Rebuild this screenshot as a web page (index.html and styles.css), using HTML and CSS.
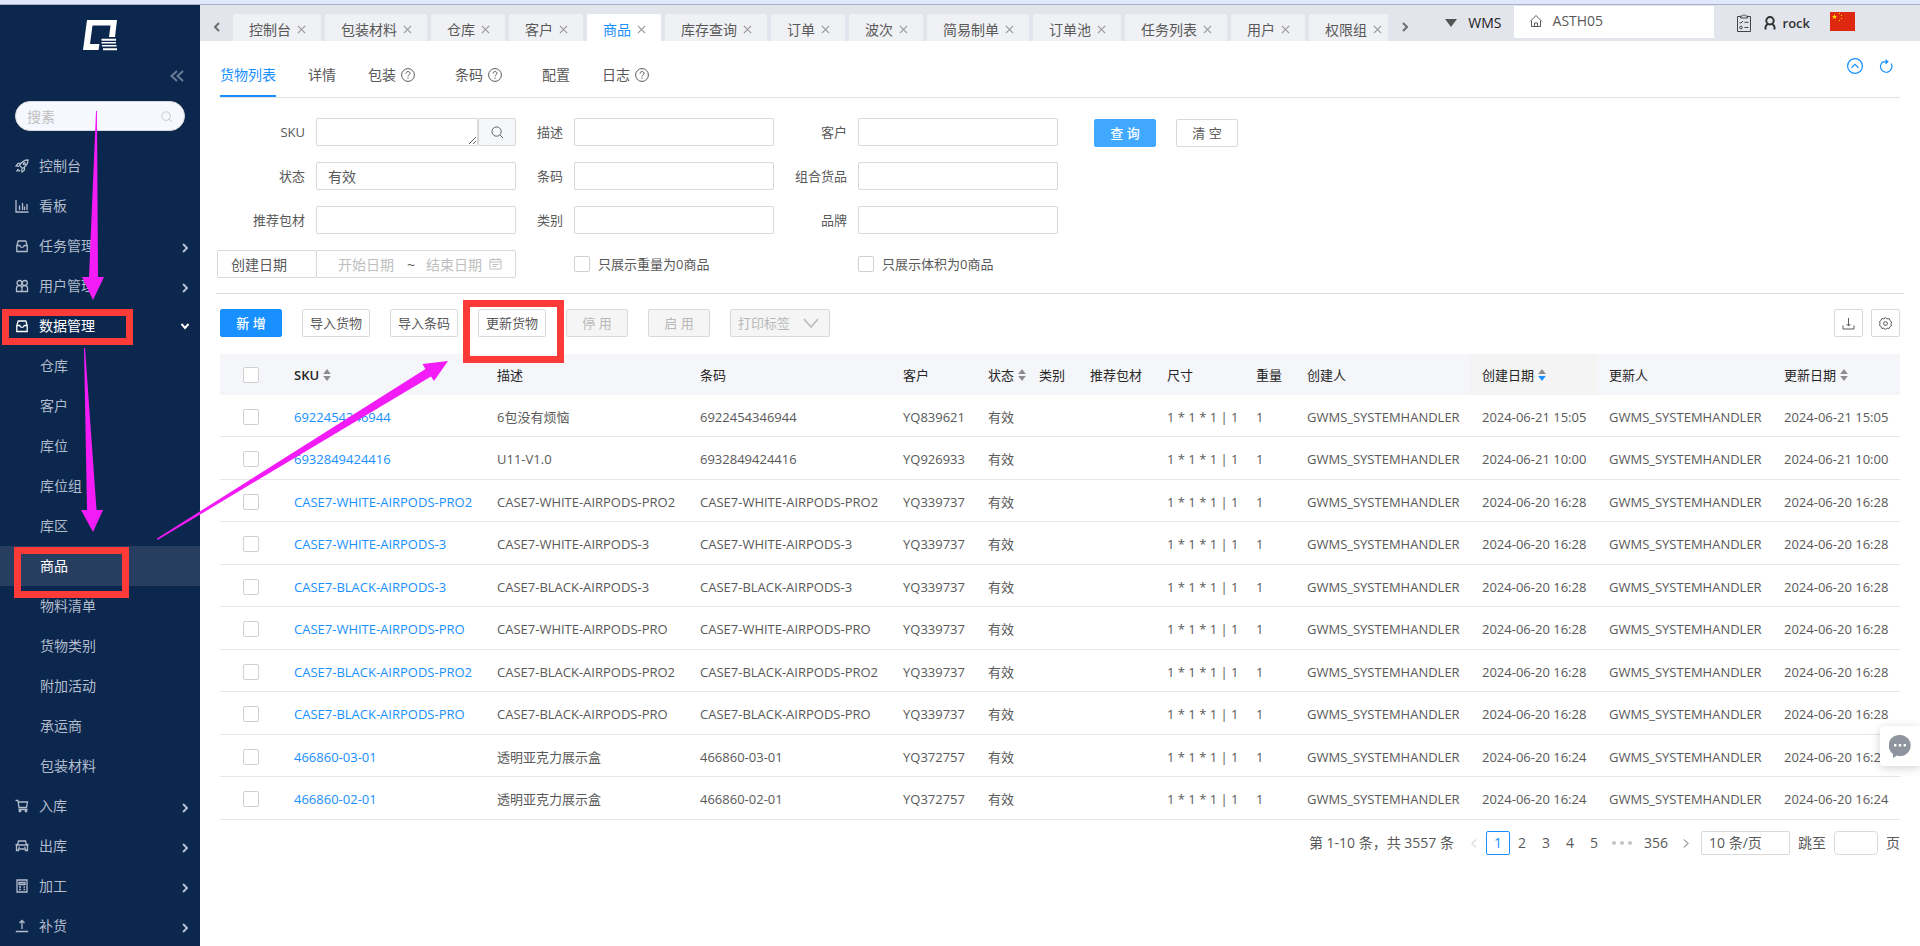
FILE: index.html
```html
<!DOCTYPE html>
<html lang="zh-CN">
<head>
<meta charset="utf-8">
<title>WMS - 商品</title>
<link rel="stylesheet" href="styles.css">
</head>
<body>
<svg class="defs" aria-hidden="true">
  <symbol id="close" viewBox="0 0 10 10"><path d="M1 1l8 8M9 1L1 9"/></symbol>
  <symbol id="right" viewBox="0 0 6 10"><path d="M1 1l4 4-4 4"/></symbol>
  <symbol id="left" viewBox="0 0 6 10"><path d="M5 1L1 5l4 4"/></symbol>
  <symbol id="search" viewBox="0 0 14 14"><circle cx="6" cy="6" r="5"/><path d="M9.7 9.7L13 13"/></symbol>
  <symbol id="help" viewBox="0 0 14 14"><circle cx="7" cy="7" r="6.4"/><path d="M5 5.6c0-2.8 4-2.6 4-.2 0 1.4-2 1.5-2 3M7 9.6v1.2"/></symbol>
  <symbol id="sort" viewBox="0 0 8 14"><path d="M4 1l3.800 5H.2z"/><path class="desc" d="M4 13L.2 8h7.600z"/></symbol>
  <symbol id="box" viewBox="0 0 14 14"><path d="M3.2 2h7.6l1.4 4.500v6H1.8v-6zM1.8 6.500h3c.3 2.400 4.100 2.400 4.400 0h3"/></symbol>
</svg>
<div class="strip"></div>
<div class="app">
  <aside class="side">
    <div class="brand">
      <svg class="logo" viewBox="0 0 34 31" aria-label="Logo"><path d="M4 0h30l-2 17h-6l1.500-11.500H9.500L7 24h9.500l-1 6H0zM18.500 18.800H33v2H18.500zM18.500 22H33v1.600H18.500zM19 25h14.500v1.600H19zM20 28.200h14v2H20z"/></svg>
    </div>
    <div class="collapse"><button class="plain" aria-label="收起"><svg width="14" height="12" viewBox="0 0 14 12"><path d="M7 1L1.500 6 7 11M13 1L7.500 6l5.500 5"/></svg></button></div>
    <label class="find"><input type="text" placeholder="搜素" aria-label="搜素"><svg width="12" height="12"><use href="#search"/></svg></label>
    <nav class="menu">
      <a href="#"><svg viewBox="0 0 14 14"><path d="M13 1C9 1 6.500 3 4.500 6.500L7.500 9.500C11 7.500 13 5 13 1zM5.500 4.500H3L1 7l3 .3M9.500 8.500V11L7 13l-.3-3M3.500 10l-2 2.500M5 11l-1.500 1.500"/><circle cx="9.300" cy="4.700" r="1"/></svg><span>控制台</span></a>
      <a href="#"><svg viewBox="0 0 14 14"><path d="M1 1v12h12.500M4.500 11V6.500M7.500 11V4M9.500 11V7.500M12 11V5"/></svg><span>看板</span></a>
      <a href="#"><svg><use href="#box"/></svg><span>任务管理</span><svg class="arr"><use href="#right"/></svg></a>
      <a href="#"><svg viewBox="0 0 14 14"><circle cx="4.500" cy="4" r="2.500"/><circle cx="9.800" cy="4" r="2.500"/><path d="M1.500 12.500V9.500q0-3 2.700-3t2.800 3v3zM7 12.500V9.500q0-3 2.800-3t2.700 3v3z"/></svg><span>用户管理</span><svg class="arr"><use href="#right"/></svg></a>
      <a href="#" class="open"><svg><use href="#box"/></svg><span>数据管理</span><svg class="arr down" viewBox="0 0 10 8"><path d="M1.500 2L5 6l3.500-4"/></svg></a>
      <a href="#" class="sub">仓库</a>
      <a href="#" class="sub">客户</a>
      <a href="#" class="sub">库位</a>
      <a href="#" class="sub">库位组</a>
      <a href="#" class="sub">库区</a>
      <a href="#" class="sub on">商品</a>
      <a href="#" class="sub">物料清单</a>
      <a href="#" class="sub">货物类别</a>
      <a href="#" class="sub">附加活动</a>
      <a href="#" class="sub">承运商</a>
      <a href="#" class="sub">包装材料</a>
      <a href="#"><svg viewBox="0 0 14 14"><path d="M.5 1.500H3L4 8.500h7.500L12.500 3H3.500M3.500 10.500h9"/><circle cx="5" cy="12" r=".8"/><circle cx="11" cy="12" r=".8"/></svg><span>入库</span><svg class="arr"><use href="#right"/></svg></a>
      <a href="#"><svg viewBox="0 0 14 14"><path d="M2.500 6L3.500 2h7l1 4M.5 5.500l2 .5h9l2-.5M1.500 6.500v5h2v-1.500h7v1.500h2v-5M3.500 8.300h1.300M9.200 8.300h1.300"/></svg><span>出库</span><svg class="arr"><use href="#right"/></svg></a>
      <a href="#"><svg viewBox="0 0 14 14"><path d="M2 1h10v12H2zM4 3.500h6v2H4zM4 8h2M8.500 8H10M4 10.500h2M8.500 10.500H10"/></svg><span>加工</span><svg class="arr"><use href="#right"/></svg></a>
      <a href="#"><svg viewBox="0 0 14 14"><path d="M7 10V1.500M4.500 4L7 1.500 9.500 4M.8 12.500h12.400"/></svg><span>补货</span><svg class="arr"><use href="#right"/></svg></a>
    </nav>
  </aside>

  <main class="main">
    <header class="top">
      <button class="plain nudge" aria-label="向左"><svg width="6" height="10"><use href="#left"/></svg></button>
      <div class="tabs">
        <a href="#">控制台<svg><use href="#close"/></svg></a>
        <a href="#">包装材料<svg><use href="#close"/></svg></a>
        <a href="#">仓库<svg><use href="#close"/></svg></a>
        <a href="#">客户<svg><use href="#close"/></svg></a>
        <a href="#" class="on">商品<svg><use href="#close"/></svg></a>
        <a href="#">库存查询<svg><use href="#close"/></svg></a>
        <a href="#">订单<svg><use href="#close"/></svg></a>
        <a href="#">波次<svg><use href="#close"/></svg></a>
        <a href="#">简易制单<svg><use href="#close"/></svg></a>
        <a href="#">订单池<svg><use href="#close"/></svg></a>
        <a href="#">任务列表<svg><use href="#close"/></svg></a>
        <a href="#">用户<svg><use href="#close"/></svg></a>
        <a href="#">权限组<svg><use href="#close"/></svg></a>
      </div>
      <button class="plain nudge" aria-label="向右"><svg width="6" height="10"><use href="#right"/></svg></button>
      <button class="plain wms"><svg width="12" height="8" viewBox="0 0 12 8"><path d="M0 0h12L6 8z"/></svg>WMS</button>
      <button class="plain depot"><svg width="14" height="14" viewBox="0 0 14 14"><path d="M1 7.500L7 1.500l6 6M2.500 7v5.500h9V7M5.500 12.500V9h3v3.500"/></svg>ASTH05</button>
      <button class="plain tasks" aria-label="任务"><svg width="16" height="20" viewBox="0 0 16 20"><path d="M4.500 3.500h-3v15h13v-15h-3M4.500 5h7V3H9.500L8 1.500 6.500 3h-2zM3.500 9l1.200 1.300L7 8M8.500 9.300h4M8.500 14.500h4"/><circle cx="5" cy="14.500" r="1.300"/></svg></button>
      <button class="plain user"><svg width="12" height="14" viewBox="0 0 12 14"><circle cx="6" cy="4.700" r="3.700"/><path d="M1.500 13.500V11q0-1.500 2.500-3M10.500 13.500V11q0-1.500-2.500-3"/></svg>rock</button>
      <svg class="flag" width="25" height="19" viewBox="0 0 25 19" role="img" aria-label="中国"><path fill="#de2910" d="M0 0h25v19H0z"/><path fill="#ffde00" d="M4.500 2l.7 1.900h2L5.600 5.100l.6 2-1.700-1.200-1.700 1.200.6-2L1.800 3.900h2zM9 1h1v1H9zM11 3h1v1h-1zM11 6h1v1h-1zM9 8h1v1H9z"/></svg>
    </header>

    <section class="page">
      <div class="views">
        <a href="#" class="on">货物列表</a>
        <a href="#">详情</a>
        <a href="#" class="tip">包装<svg><use href="#help"/></svg></a>
        <a href="#" class="tip">条码<svg><use href="#help"/></svg></a>
        <a href="#">配置</a>
        <a href="#">日志<svg><use href="#help"/></svg></a>
        <div class="acts">
          <button class="plain" aria-label="收起"><svg width="16" height="16" viewBox="0 0 16 16"><circle cx="8" cy="8" r="7.400"/><path d="M4.500 9.700L8 6.300l3.500 3.400"/></svg></button>
          <button class="plain" aria-label="刷新"><svg width="14" height="14" viewBox="0 0 14 14"><path d="M4.500 2.500A5.700 5.700 0 1 0 12 4.500M8 2.800H4.300M6.500.8L8.800 2.800 6.500 4.800"/></svg></button>
        </div>
      </div>

      <form class="filter">
        <div class="fields">
          <label for="sku">SKU</label>
          <div class="group"><textarea id="sku" rows="1"></textarea><button type="button" aria-label="查找"><svg width="13" height="13"><use href="#search"/></svg></button></div>
          <label for="desc">描述</label><input id="desc" type="text">
          <label for="cust">客户</label><input id="cust" type="text">
          <label for="state">状态</label><select id="state"><option>有效</option></select>
          <label for="code">条码</label><input id="code" type="text">
          <label for="combo">组合货品</label><input id="combo" type="text">
          <label for="pack">推荐包材</label><input id="pack" type="text">
          <label for="kind">类别</label><input id="kind" type="text">
          <label for="mark">品牌</label><input id="mark" type="text">
          <select class="by" aria-label="日期类型"><option>创建日期</option></select>
          <div class="range"><input type="text" placeholder="开始日期" aria-label="开始日期"><span>~</span><input type="text" placeholder="结束日期" aria-label="结束日期"><svg width="13" height="13" viewBox="0 0 13 13"><path d="M1 2.500h11v9.500H1zM1 5h11M4 1v2.500M9 1v2.500M3.500 7.500h6M3.500 9.500h4"/></svg></div>
          <label class="only w"><input type="checkbox">只展示重量为0商品</label>
          <label class="only v"><input type="checkbox">只展示体积为0商品</label>
        </div>
        <div class="go"><button type="button" class="btn query">查 询</button><button type="button" class="btn">清 空</button></div>
      </form>

      <div class="tools">
        <button class="btn primary">新 增</button>
        <button class="btn">导入货物</button>
        <button class="btn">导入条码</button>
        <button class="btn">更新货物</button>
        <button class="btn" disabled>停 用</button>
        <button class="btn" disabled>启 用</button>
        <button class="btn print" disabled>打印标签<svg width="16" height="10" viewBox="0 0 16 10"><path d="M1 1l7 8 7-8"/></svg></button>
        <div class="right">
          <button class="btn ico" aria-label="下载"><svg width="13" height="13" viewBox="0 0 13 13"><path d="M1 8.500V12h11V8.500M6.500 1v8M4.500 7l2 2 2-2"/></svg></button>
          <button class="btn ico" aria-label="设置"><svg width="13" height="13" viewBox="0 0 13 13"><path d="M6.500.7l1.700 1.100 2-.1.800 1.900 1.500 1.300-.5 1.900.5 1.900L11 9.700l-.8 1.700-2-.1-1.700 1.100-1.700-1.100-2 .1L2 9.500.5 8.400 1 6.500.5 4.600 2 3.500l.8-1.800 2 .1z"/><circle cx="6.500" cy="6.500" r="1.900"/></svg></button>
        </div>
      </div>

      <table class="grid">
        <colgroup><col class="c62"><col class="c203"><col class="c203"><col class="c203"><col class="c85"><col class="c51"><col class="c51"><col class="c77"><col class="c89"><col class="c51"><col class="c175"><col class="c127"><col class="c175"><col class="c128"></colgroup>
        <thead><tr>
          <th class="ck"><input type="checkbox" aria-label="全选"></th><th class="strong">SKU<svg><use href="#sort"/></svg></th><th>描述</th><th>条码</th><th>客户</th><th>状态<svg><use href="#sort"/></svg></th><th>类别</th><th>推荐包材</th><th>尺寸</th><th>重量</th><th>创建人</th><th class="sorted">创建日期<svg><use href="#sort"/></svg></th><th>更新人</th><th>更新日期<svg><use href="#sort"/></svg></th>
        </tr></thead>
        <tbody>
          <tr><td class="ck"><input type="checkbox" aria-label="选择"></td><td><a href="#">6922454346944</a></td><td>6包没有烦恼</td><td>6922454346944</td><td>YQ839621</td><td>有效</td><td></td><td></td><td>1 * 1 * 1 | 1</td><td>1</td><td>GWMS_SYSTEMHANDLER</td><td>2024-06-21 15:05</td><td>GWMS_SYSTEMHANDLER</td><td>2024-06-21 15:05</td></tr>
          <tr><td class="ck"><input type="checkbox" aria-label="选择"></td><td><a href="#">6932849424416</a></td><td>U11-V1.0</td><td>6932849424416</td><td>YQ926933</td><td>有效</td><td></td><td></td><td>1 * 1 * 1 | 1</td><td>1</td><td>GWMS_SYSTEMHANDLER</td><td>2024-06-21 10:00</td><td>GWMS_SYSTEMHANDLER</td><td>2024-06-21 10:00</td></tr>
          <tr><td class="ck"><input type="checkbox" aria-label="选择"></td><td><a href="#">CASE7-WHITE-AIRPODS-PRO2</a></td><td>CASE7-WHITE-AIRPODS-PRO2</td><td>CASE7-WHITE-AIRPODS-PRO2</td><td>YQ339737</td><td>有效</td><td></td><td></td><td>1 * 1 * 1 | 1</td><td>1</td><td>GWMS_SYSTEMHANDLER</td><td>2024-06-20 16:28</td><td>GWMS_SYSTEMHANDLER</td><td>2024-06-20 16:28</td></tr>
          <tr><td class="ck"><input type="checkbox" aria-label="选择"></td><td><a href="#">CASE7-WHITE-AIRPODS-3</a></td><td>CASE7-WHITE-AIRPODS-3</td><td>CASE7-WHITE-AIRPODS-3</td><td>YQ339737</td><td>有效</td><td></td><td></td><td>1 * 1 * 1 | 1</td><td>1</td><td>GWMS_SYSTEMHANDLER</td><td>2024-06-20 16:28</td><td>GWMS_SYSTEMHANDLER</td><td>2024-06-20 16:28</td></tr>
          <tr><td class="ck"><input type="checkbox" aria-label="选择"></td><td><a href="#">CASE7-BLACK-AIRPODS-3</a></td><td>CASE7-BLACK-AIRPODS-3</td><td>CASE7-BLACK-AIRPODS-3</td><td>YQ339737</td><td>有效</td><td></td><td></td><td>1 * 1 * 1 | 1</td><td>1</td><td>GWMS_SYSTEMHANDLER</td><td>2024-06-20 16:28</td><td>GWMS_SYSTEMHANDLER</td><td>2024-06-20 16:28</td></tr>
          <tr><td class="ck"><input type="checkbox" aria-label="选择"></td><td><a href="#">CASE7-WHITE-AIRPODS-PRO</a></td><td>CASE7-WHITE-AIRPODS-PRO</td><td>CASE7-WHITE-AIRPODS-PRO</td><td>YQ339737</td><td>有效</td><td></td><td></td><td>1 * 1 * 1 | 1</td><td>1</td><td>GWMS_SYSTEMHANDLER</td><td>2024-06-20 16:28</td><td>GWMS_SYSTEMHANDLER</td><td>2024-06-20 16:28</td></tr>
          <tr><td class="ck"><input type="checkbox" aria-label="选择"></td><td><a href="#">CASE7-BLACK-AIRPODS-PRO2</a></td><td>CASE7-BLACK-AIRPODS-PRO2</td><td>CASE7-BLACK-AIRPODS-PRO2</td><td>YQ339737</td><td>有效</td><td></td><td></td><td>1 * 1 * 1 | 1</td><td>1</td><td>GWMS_SYSTEMHANDLER</td><td>2024-06-20 16:28</td><td>GWMS_SYSTEMHANDLER</td><td>2024-06-20 16:28</td></tr>
          <tr><td class="ck"><input type="checkbox" aria-label="选择"></td><td><a href="#">CASE7-BLACK-AIRPODS-PRO</a></td><td>CASE7-BLACK-AIRPODS-PRO</td><td>CASE7-BLACK-AIRPODS-PRO</td><td>YQ339737</td><td>有效</td><td></td><td></td><td>1 * 1 * 1 | 1</td><td>1</td><td>GWMS_SYSTEMHANDLER</td><td>2024-06-20 16:28</td><td>GWMS_SYSTEMHANDLER</td><td>2024-06-20 16:28</td></tr>
          <tr><td class="ck"><input type="checkbox" aria-label="选择"></td><td><a href="#">466860-03-01</a></td><td>透明亚克力展示盒</td><td>466860-03-01</td><td>YQ372757</td><td>有效</td><td></td><td></td><td>1 * 1 * 1 | 1</td><td>1</td><td>GWMS_SYSTEMHANDLER</td><td>2024-06-20 16:24</td><td>GWMS_SYSTEMHANDLER</td><td>2024-06-20 16:24</td></tr>
          <tr><td class="ck"><input type="checkbox" aria-label="选择"></td><td><a href="#">466860-02-01</a></td><td>透明亚克力展示盒</td><td>466860-02-01</td><td>YQ372757</td><td>有效</td><td></td><td></td><td>1 * 1 * 1 | 1</td><td>1</td><td>GWMS_SYSTEMHANDLER</td><td>2024-06-20 16:24</td><td>GWMS_SYSTEMHANDLER</td><td>2024-06-20 16:24</td></tr>
        </tbody>
      </table>

      <div class="pager">
        <span class="total">第 1-10 条，共 3557 条</span>
        <button class="plain off" aria-label="上一页"><svg width="6" height="11"><use href="#left"/></svg></button>
        <button class="plain on">1</button><button class="plain">2</button><button class="plain">3</button><button class="plain">4</button><button class="plain">5</button>
        <span class="dots"><i></i><i></i><i></i></span>
        <button class="plain last">356</button>
        <button class="plain" aria-label="下一页"><svg width="6" height="11"><use href="#right"/></svg></button>
        <select aria-label="每页条数"><option>10 条/页</option></select>
        <label class="jump">跳至<input type="text">页</label>
      </div>
    </section>
  </main>
</div>

<button class="plain chat" aria-label="客服"><svg width="22" height="24" viewBox="0 0 22 24"><path fill="#8f959e" d="M11 1a10.500 10.500 0 1 1-3 20.500L4 24v-4A10.500 10.500 0 0 1 11 1z"/><path fill="#fff" d="M5 10h2.400v2.400H5zM9.800 10h2.400v2.400H9.800zM14.600 10H17v2.400h-2.400z"/></svg></button>

<svg class="marks" width="600" height="620" viewBox="0 0 600 620" aria-hidden="true">
  <g class="frame"><rect x="5.500" y="312.500" width="124" height="29"/><rect x="17.500" y="550.500" width="108" height="44"/><rect x="466.500" y="303.500" width="94" height="56"/></g>
  <g class="arrow"><path d="M96 111h1l1 166h6l-11 23-11-23h7z"/><path d="M84 348h1l11.500 162h6.500l-10 22-12-22h6z"/><path d="M157 538.500l268.500-169.500-3-5 25.500-3-14 20-3-4.500L157.500 540z"/></g>
</svg>
</body>
</html>
```
FILE: styles.css
```css
* { box-sizing: border-box; }
body {
  margin: 0;
  height: 100vh;
  display: flex;
  flex-direction: column;
  overflow: hidden;
  position: relative;
  font: 13px/20px "Open Sans", "Noto Sans CJK SC", sans-serif;
  color: #595959;
  background: #fff;
}
a { color: inherit; text-decoration: none; }
svg { fill: none; stroke: currentColor; flex: none; }
.defs { display: none; }
input, textarea, select, button { font: inherit; color: inherit; margin: 0; }
.plain { border: 0; background: none; padding: 0; display: flex; align-items: center; justify-content: center; }
.strip { flex: none; height: 5px; background: #dfe9fb; border-bottom: 1px solid #a9b1c5; }
.app { flex: 1; min-height: 0; display: flex; }

/* sidebar */
.side { flex: 0 0 200px; background: #0c274e; color: #b2bccb; overflow: hidden; font-size: 14px; }
.brand { height: 61px; padding-top: 15px; display: flex; justify-content: center; align-items: flex-start; }
.logo { width: 34px; height: 31px; fill: #fff; stroke: none; }
.collapse { display: flex; justify-content: flex-end; padding: 4px 16px 0; height: 35px; align-items: flex-start; color: #6a7b95; }
.collapse svg { stroke-width: 2; }
.find { display: flex; align-items: center; height: 30px; margin: 0 15px 15px; padding: 2px 11px 0; border: 1px solid #d9d9d9; border-radius: 15px; background: #f5f8fe; color: #bfbfbf; }
.find input { flex: 1; min-width: 0; border: 0; background: none; outline: 0; padding: 0; }
::placeholder { color: #bfbfbf; opacity: 1; }
.menu a { display: flex; align-items: center; height: 40px; padding: 0 12px 0 15px; }
.menu svg { width: 14px; height: 14px; stroke-width: 1.3; }
.menu span { flex: 1; margin-left: 10px; }
.menu .arr { width: 6px; height: 10px; stroke-width: 2; margin-top: 4px; }
.menu .arr.down { width: 10px; height: 8px; margin: 0 -2px 0 0; }
.menu .sub { padding-left: 40px; }
.menu .open, .menu .on { color: #fff; }
.menu .on { background: #273e61; }

/* top bar */
.main { flex: 1; min-width: 0; display: flex; flex-direction: column; }
.top { display: flex; align-items: center; height: 36px; background: #e3e5ec; font-size: 14px; }
.nudge { width: 33px; height: 27px; color: #6e6e6e; }
.nudge svg { stroke-width: 2; }
.top .nudge { margin-top: 8px; }
.tabs { flex: 0 1 1155px; min-width: 0; display: flex; gap: 4px; align-self: flex-end; overflow: hidden; }
.tabs a { flex: none; display: flex; align-items: center; height: 27px; padding: 4px 15px 0 16px; background: #f0f1f5; border-radius: 2px 2px 0 0; }
.tabs svg { width: 9px; height: 9px; margin-left: 6px; color: #999; stroke-width: 1.3; }
.tabs .on { background: #fff; color: #1890ff; }
.wms { gap: 11px; margin: 0 12px 0 auto; color: #222; }
.wms svg { fill: #555; stroke: none; }
.depot { width: 200px; height: 32px; margin-bottom: 2px; padding: 0 0 2px 15px; background: #fff; justify-content: flex-start; gap: 10px; }
.tasks { margin-left: 22px; color: #444; }
.user { margin: 0 20px 0 12px; gap: 7px; color: #333; font-weight: 600; font-size: 13px; }
.user svg { stroke-width: 2; }
.flag { stroke: none; margin-right: 65px; margin-bottom: 4px; }

/* page */
.page { padding: 0 20px; flex: 1; }
.views { display: flex; align-items: stretch; gap: 32px; height: 57px; border-bottom: 1px solid #e4e4e4; font-size: 14px; }
.views > a { display: flex; align-items: center; padding-top: 14px; border-bottom: 2px solid transparent; }
.views > a svg { width: 14px; height: 14px; margin-left: 5px; }
.views > .tip { padding-right: 8px; }
.views > .on { color: #1890ff; border-color: #1890ff; }
.acts { margin: 0 7px 6px auto; display: flex; align-items: center; gap: 16px; color: #1890ff; }
.acts svg { stroke-width: 1.2; }

.filter { display: flex; gap: 36px; margin: 0 -4px; padding: 20px 0 15px; border-bottom: 1px solid #dcdcdc; }
.fields { display: grid; grid-template-columns: 89px 200px 36px 200px 62px 200px; column-gap: 11px; row-gap: 16px; align-items: center; }
.fields > label { text-align: right; white-space: nowrap; }
.fields > input, .fields > select, .group, .range { width: 100%; height: 28px; border: 1px solid #d9d9d9; border-radius: 2px; background: #fff; }
.fields > select { appearance: none; padding: 2px 11px 0; font-size: 14px; }
.group { display: flex; border: 0; }
.group textarea { width: 162px; height: 28px; min-height: 28px; border: 1px solid #d9d9d9; border-radius: 2px; padding: 3px 8px; resize: both; overflow: hidden; }
.group button { flex: 1; border: 1px solid #d9d9d9; background: #f5f7fb; display: flex; align-items: center; justify-content: center; border-radius: 0 2px 2px 0; padding: 0; }
.fields > .by { width: 100px; margin-left: 1px; padding: 2px 13px 0; }
.range { display: flex; align-items: center; padding: 2px 12px 0 21px; gap: 11px; font-size: 14px; }
.range input { width: 58px; border: 0; padding: 0; background: none; }
.range svg { color: #bfbfbf; margin-bottom: 4px; }
.range input + svg { margin-left: -6px; }
.fields > .only { display: flex; align-items: center; gap: 8px; }
.only.w { grid-column: 4; }
.only.v { grid-column: 6; }
input[type=checkbox] { appearance: none; width: 16px; height: 16px; border: 1px solid #d0d0d0; border-radius: 2px; background: #fff; flex: none; }
.go { display: flex; gap: 20px; align-items: flex-start; padding-top: 1px; }

.btn { height: 28px; min-width: 62px; padding: 0 7px; border: 1px solid #d9d9d9; border-radius: 2px; background: #fff; white-space: nowrap; line-height: 20px; }
.btn.primary { background: #1890ff; border-color: #1890ff; color: #fff; font-weight: 500; }
.btn.query { background: #40a9ff; border-color: #40a9ff; color: #fff; font-weight: 500; }
.btn:disabled { background: #f5f5f5; color: #b8b8b8; }
.tools { display: flex; gap: 20px; padding: 15px 0 17px; }
.print { width: 100px; display: flex; align-items: center; gap: 13px; }
.print svg { stroke-width: 1.5; }
.right { margin-left: auto; display: flex; gap: 8px; }
.ico { min-width: 0; width: 29px; display: flex; align-items: center; justify-content: center; }

/* table */
.grid { width: 100%; table-layout: fixed; border-collapse: separate; border-spacing: 0; }
.c62 { width: 62px; } .c203 { width: 203px; } .c85 { width: 85px; } .c51 { width: 51px; } .c77 { width: 77px; }
.c89 { width: 89px; } .c175 { width: 175px; } .c127 { width: 127px; } .c128 { width: 128px; }
.grid th { height: 41px; padding: 0 0 0 12px; text-align: left; font-weight: 400; color: #262626; background: #f5f6fa; white-space: nowrap; }
.grid .strong { font-weight: 600; }
.grid .sorted { --desc: #1890ff; background: #f4f4f4; }
.desc { fill: var(--desc, #8c8c8c); }
.grid th svg { width: 8px; height: 14px; margin-left: 4px; vertical-align: -2px; stroke: none; fill: #8c8c8c; }
.grid td { height: 43px; padding: 2px 0 0 12px; border-bottom: 1px solid #e6e6e6; white-space: nowrap; }
.grid tr:nth-child(odd) td { height: 42px; }
.grid td a { color: #1890ff; }
.grid .ck { padding-left: 23px; }
.grid .ck input { display: block; }

/* pager */
.pager { display: flex; justify-content: flex-end; align-items: center; padding-top: 11px; font-size: 14px; }
.pager button { width: 24px; height: 24px; }
.pager .total { margin-right: 8px; }
.pager .on { border: 1px solid #1890ff; border-radius: 2px; color: #1890ff; }
.pager .off { color: #bfbfbf; }
.pager .last { width: 36px; }
.dots { width: 32px; display: flex; justify-content: center; gap: 4px; }
.dots i { width: 4px; height: 4px; border-radius: 50%; background: #c4c4c4; }
.pager select { appearance: none; width: 89px; height: 24px; margin: 0 8px 0 3px; padding: 0 7px; border: 1px solid #d9d9d9; border-radius: 2px; background: #fff; }
.jump { display: flex; align-items: center; gap: 8px; }
.jump input { width: 44px; height: 24px; border: 1px solid #d9d9d9; border-radius: 4px; }

/* floating layers */
.chat { position: absolute; right: 0; top: 726px; width: 40px; height: 40px; background: #fff; border-radius: 4px 0 0 4px; box-shadow: 0 2px 10px rgba(0, 0, 0, .18); }
.chat svg { stroke: none; }
.marks { position: absolute; left: 0; top: 0; pointer-events: none; }
.frame { stroke: #fc3a38; stroke-width: 7; }
.arrow { fill: #f31cf6; stroke: none; }
```
